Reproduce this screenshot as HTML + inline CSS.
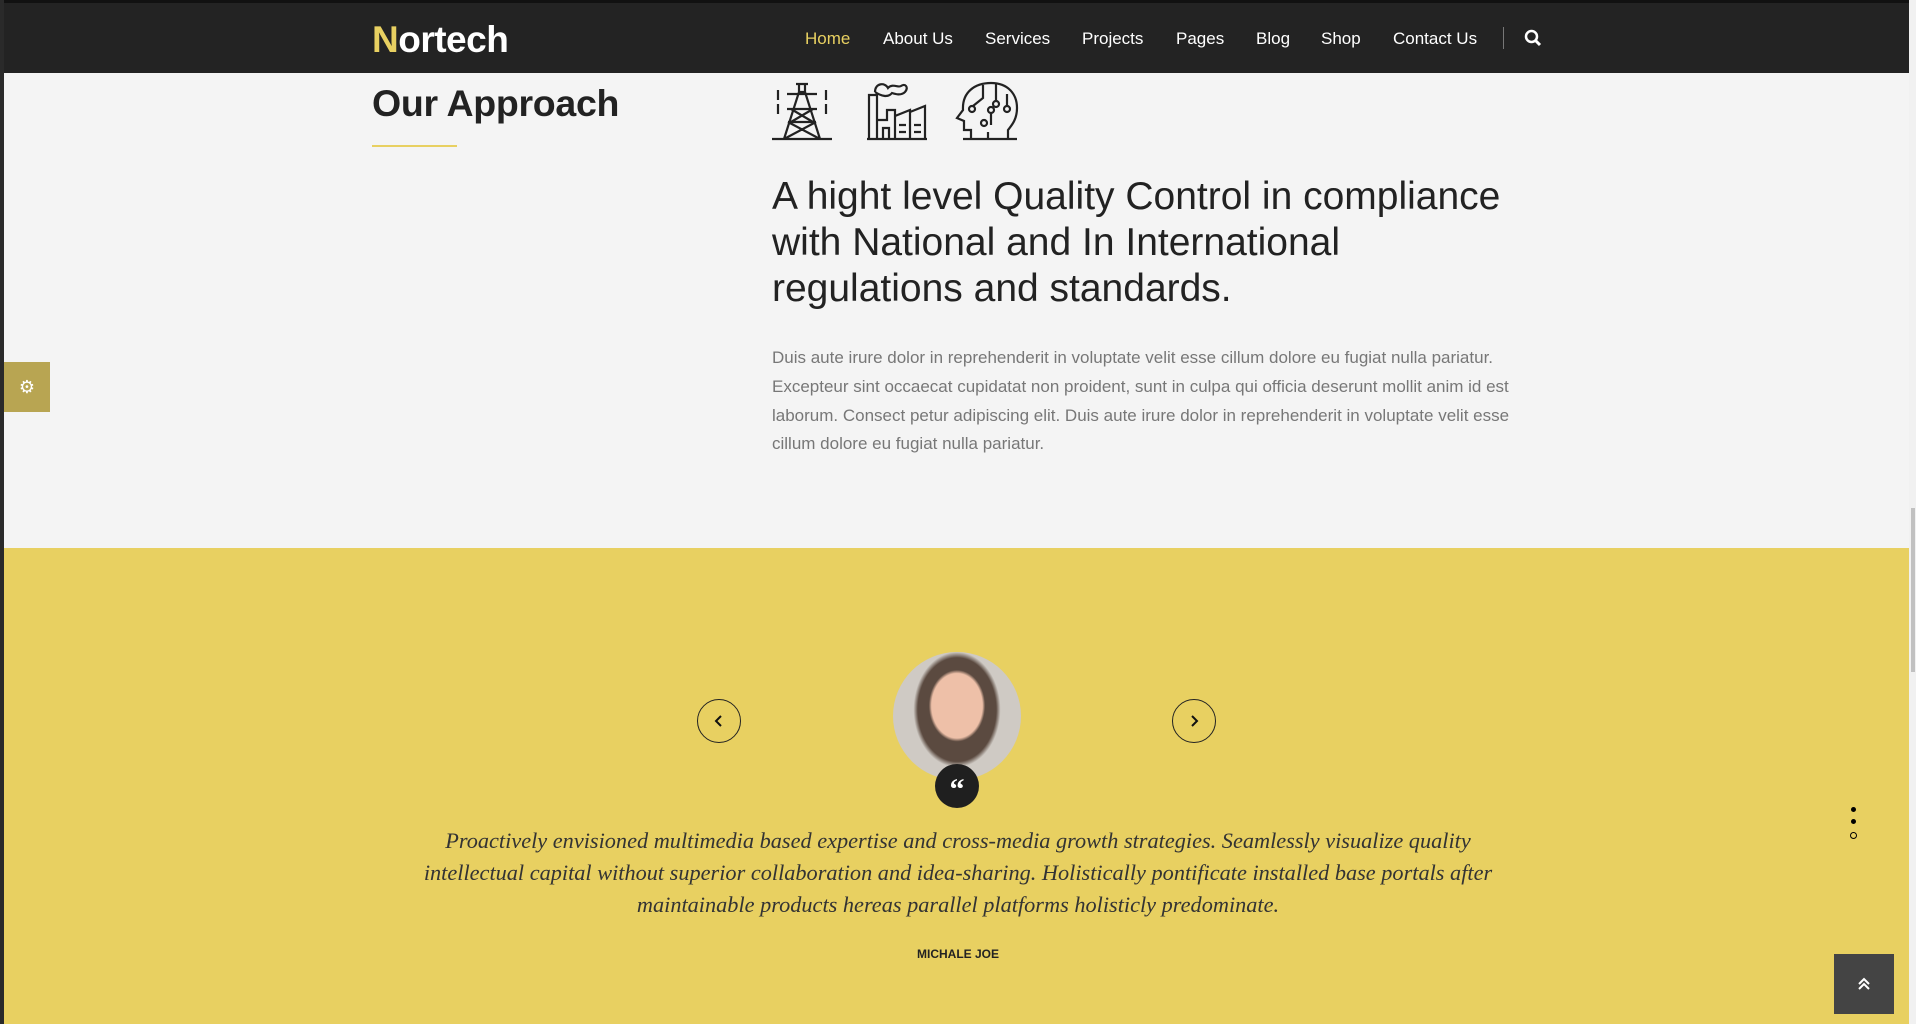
<!DOCTYPE html>
<html><head><meta charset="utf-8"><style>
*{margin:0;padding:0;box-sizing:border-box}
body{width:1916px;height:1024px;overflow:hidden;background:#f4f4f4;font-family:"Liberation Sans",sans-serif;position:relative}
.lb{position:absolute;left:0;top:0;width:4px;height:1024px;background:#2a2a2a;z-index:5}
.hdr{position:absolute;left:0;top:0;width:1909px;height:73px;background:#232323;border-top:3px solid #111}
.logo{position:absolute;left:372px;top:16px;font-size:37px;font-weight:bold;color:#fff;letter-spacing:-0.5px}
.logo b{color:#e8d061}
.nav{position:absolute;top:26px;font-size:17px;color:#fff}
.nav span{position:absolute;white-space:nowrap}
.sb{position:absolute;left:1909px;top:0;width:7px;height:1024px;background:#f1f1f1}
.sb i{position:absolute;left:2px;top:508px;width:4px;height:164px;background:#c1c1c1}
h2{position:absolute;left:372px;top:82px;font-size:37.5px;font-weight:bold;color:#222;letter-spacing:-0.3px}
.ul{position:absolute;left:372px;top:145px;width:85px;height:2px;background:#e8d061}
.big{position:absolute;left:772px;top:174px;font-size:39px;line-height:46px;color:#222;font-weight:normal;width:800px;white-space:nowrap}
.p{position:absolute;left:772px;top:344px;width:800px;white-space:nowrap;font-size:17px;line-height:28.8px;color:#777}
.gear{position:absolute;left:4px;top:362px;width:46px;height:50px;background:#b8a552;color:#fff;font-size:18px;text-align:center;line-height:50px}
.yel{position:absolute;left:4px;top:548px;width:1905px;height:476px;background:#e8d061}
.av{position:absolute;left:893px;top:652px;width:128px;height:128px;border-radius:50%;background:radial-gradient(ellipse 22% 28% at 50% 42%,#eec0a8 0 90%,transparent 100%),radial-gradient(ellipse 34% 45% at 50% 45%,#5b4a40 0 90%,transparent 100%),#cfcac4;overflow:hidden}
.qt{position:absolute;left:935px;top:764px;width:44px;height:44px;border-radius:50%;background:#1f1f1f;color:#fff;font:bold 30px "Liberation Serif",serif;text-align:center;line-height:52px}
.arr{position:absolute;top:699px;width:44px;height:44px;border:1.5px solid #222;border-radius:50%}
.arr svg{position:absolute;left:14px;top:14px}
.q{position:absolute;left:358px;top:825px;width:1200px;white-space:nowrap;text-align:center;font-family:"Liberation Serif",serif;font-style:italic;font-size:22.3px;line-height:32px;color:#333}
.nm{position:absolute;left:0;width:1916px;top:947px;text-align:center;font-size:12px;font-weight:bold;color:#222}
.dot{position:absolute;left:1851px;width:5px;height:5px;border-radius:50%;background:#000}
.top{position:absolute;left:1834px;top:954px;width:60px;height:60px;background:#444;color:#fff;text-align:center}
</style></head><body>
<div class="lb"></div>
<div class="hdr">
<div class="logo"><b>N</b>ortech</div>
<div class="nav">
<span style="left:805px;color:#e8d061">Home</span>
<span style="left:883px">About Us</span>
<span style="left:985px">Services</span>
<span style="left:1082px">Projects</span>
<span style="left:1176px">Pages</span>
<span style="left:1256px">Blog</span>
<span style="left:1321px">Shop</span>
<span style="left:1393px">Contact Us</span>
</div>
<div style="position:absolute;left:1503px;top:24px;width:1px;height:22px;background:#777"></div>
<svg style="position:absolute;left:1524px;top:26px" width="18" height="18" viewBox="0 0 18 18"><circle cx="7.5" cy="7.5" r="5.5" fill="none" stroke="#fff" stroke-width="2.5"/><path d="M11.5 11.5L16 16" stroke="#fff" stroke-width="3"/></svg>
</div>
<div class="sb"><i></i></div>
<h2>Our Approach</h2>
<div class="ul"></div>
<svg style="position:absolute;left:771px;top:80px" width="250" height="62" viewBox="0 0 250 62" fill="none" stroke="#222" stroke-width="2.2">
<path d="M1 59H61M13 59L28 12H34L49 59M25 4H37M28 4V12M34 4V12M16 14H46M16 29H46M17 42H45M20 29L42 42M42 29L20 42M13 59L45 42M49 59L17 42M7 10V20M55 10V20M7 24V34M55 24V34"/>
<path d="M96 59H156M98 59V15H106V59M106 40H116V30H124V40M124 59V36L139 30V59M139 32L154 26V59M112 59V48H118V59M128 45H135M143 45H150M128 52H135M143 52H150M104 12C104 3 114 2 117 8C121 3 128 8 130 6C134 3 138 7 134 12C130 16 124 14 121 13C117 18 110 16 104 12"/>
<path d="M192 59H246M200 59V50H193V41L186 38L192 30C191 12 204 3 220 3C237 3 246 14 246 28C246 40 240 46 237 50V59M212 5V18L202 26M225 4V20M236 14V26M220 32V45M217 52V58"/>
<circle cx="201" cy="29" r="3"/><circle cx="225" cy="24" r="3"/><circle cx="236" cy="29" r="3"/><circle cx="220" cy="30" r="3"/><circle cx="213" cy="43" r="3"/>
</svg>
<div class="big">A hight level Quality Control in compliance<br>with National and In International<br>regulations and standards.</div>
<div class="p">Duis aute irure dolor in reprehenderit in voluptate velit esse cillum dolore eu fugiat nulla pariatur.<br>Excepteur sint occaecat cupidatat non proident, sunt in culpa qui officia deserunt mollit anim id est<br>laborum. Consect petur adipiscing elit. Duis aute irure dolor in reprehenderit in voluptate velit esse<br>cillum dolore eu fugiat nulla pariatur.</div>
<div class="gear">&#9881;</div>
<div class="yel"></div>
<div class="arr" style="left:697px"><svg width="14" height="14" viewBox="0 0 14 14"><path d="M9 2L4 7L9 12" fill="none" stroke="#111" stroke-width="2"/></svg></div>
<div class="arr" style="left:1172px"><svg width="14" height="14" viewBox="0 0 14 14"><path d="M5 2L10 7L5 12" fill="none" stroke="#111" stroke-width="2"/></svg></div>
<div class="av"></div>
<div class="qt">&ldquo;</div>
<div class="q">Proactively envisioned multimedia based expertise and cross-media growth strategies. Seamlessly visualize quality<br>intellectual capital without superior collaboration and idea-sharing. Holistically pontificate installed base portals after<br>maintainable products hereas parallel platforms holisticly predominate.</div>
<div class="nm">MICHALE JOE</div>
<div class="dot" style="top:807px"></div>
<div class="dot" style="top:819px"></div>
<div class="dot" style="top:832px;width:7px;height:7px;left:1850px;background:none;border:1.3px solid #000"></div>
<div class="top"><svg style="margin-top:22px" width="16" height="16" viewBox="0 0 16 16"><path d="M3 8L8 3L13 8M3 13L8 8L13 13" fill="none" stroke="#fff" stroke-width="2"/></svg></div>
</body></html>
